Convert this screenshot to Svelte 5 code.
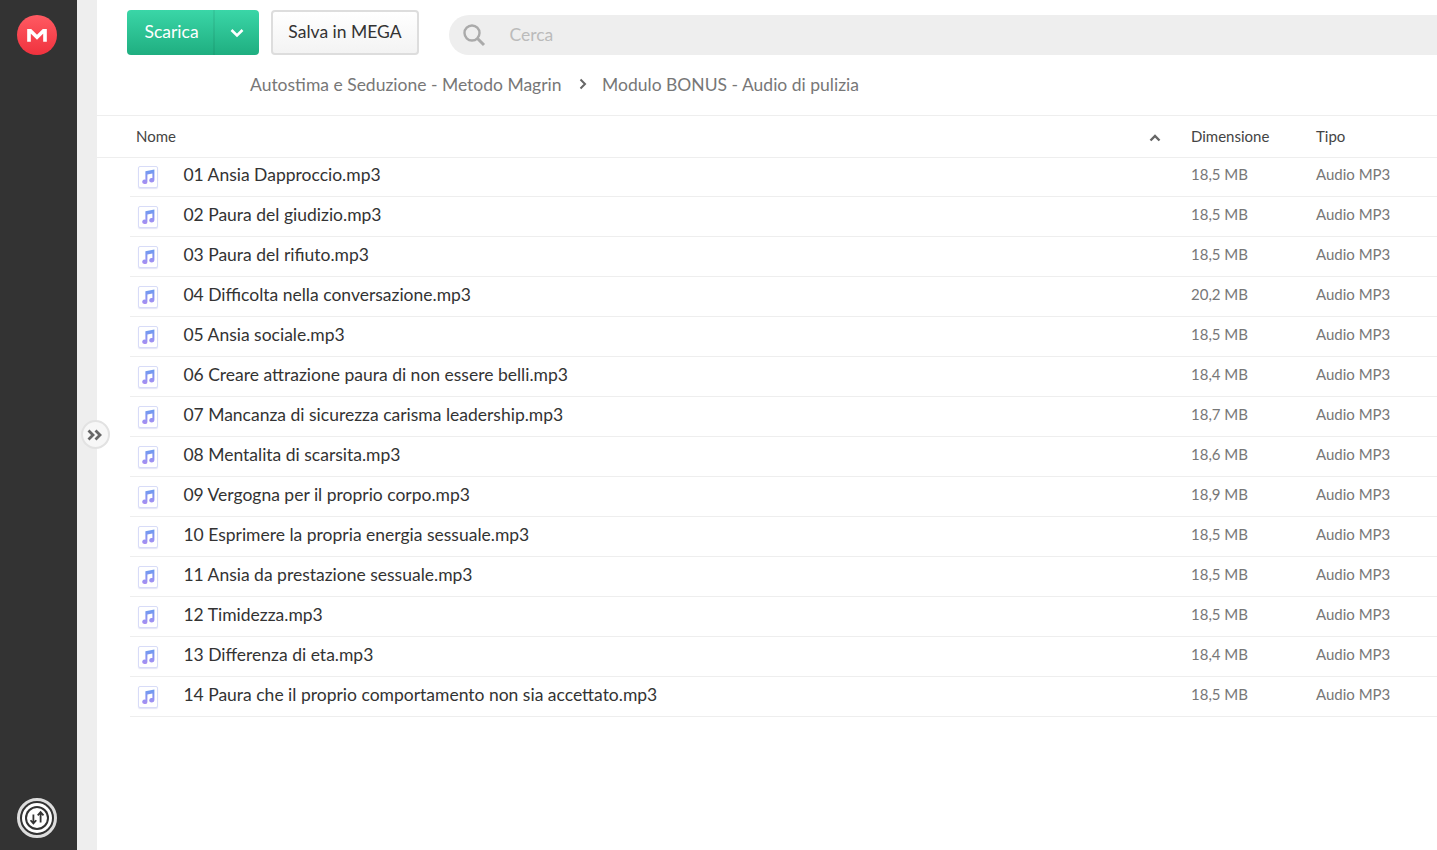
<script>
	const files = [
		['01 Ansia Dapproccio.mp3', '18,5 MB'],
		['02 Paura del giudizio.mp3', '18,5 MB'],
		['03 Paura del rifiuto.mp3', '18,5 MB'],
		['04 Difficolta nella conversazione.mp3', '20,2 MB'],
		['05 Ansia sociale.mp3', '18,5 MB'],
		['06 Creare attrazione paura di non essere belli.mp3', '18,4 MB'],
		['07 Mancanza di sicurezza carisma leadership.mp3', '18,7 MB'],
		['08 Mentalita di scarsita.mp3', '18,6 MB'],
		['09 Vergogna per il proprio corpo.mp3', '18,9 MB'],
		['10 Esprimere la propria energia sessuale.mp3', '18,5 MB'],
		['11 Ansia da prestazione sessuale.mp3', '18,5 MB'],
		['12 Timidezza.mp3', '18,5 MB'],
		['13 Differenza di eta.mp3', '18,4 MB'],
		['14 Paura che il proprio comportamento non sia accettato.mp3', '18,5 MB']
	];
</script>

<div class="page">
	<aside class="sidebar">
		<div class="logo">
			<svg width="20" height="14" viewBox="0 0 22 15">
				<path d="M2.2 15V2.8h1.6L11 10l7.2-7.2h1.6V15" fill="none" stroke="#fff" stroke-width="4" stroke-linejoin="miter" />
			</svg>
		</div>
		<div class="transfers">
			<div class="ring">
				<div class="ring-inner">
					<svg width="18" height="18" viewBox="0 0 20 20">
						<path d="M6 6v10M2.8 12.5 6 16l3.2-3.5M14 15V3.5M10.8 7 14 3.5 17.2 7" fill="none" stroke="#333" stroke-width="2" />
					</svg>
				</div>
			</div>
		</div>
	</aside>

	<div class="strip">
		<button class="collapse" aria-label="Espandi">
			<svg width="16" height="12" viewBox="0 0 16 12">
				<path d="M1.5 1.5 6 6 1.5 10.5M8.5 1.5 13 6 8.5 10.5" fill="none" stroke="#666" stroke-width="2.8" />
			</svg>
		</button>
	</div>

	<main class="main">
		<div class="toolbar">
			<div class="download">
				<span class="download-label">Scarica</span>
				<span class="download-arrow">
					<svg width="14" height="10" viewBox="0 0 14 10">
						<path d="M1.5 2 7 7.5 12.5 2" fill="none" stroke="#fff" stroke-width="2.6" />
					</svg>
				</span>
			</div>
			<div class="save">Salva in MEGA</div>
			<div class="search">
				<svg width="26" height="26" viewBox="0 0 26 26">
					<circle cx="11" cy="11" r="7.5" fill="none" stroke="#aaa" stroke-width="2.4" />
					<path d="M16.5 16.5 23 23" stroke="#aaa" stroke-width="3" />
				</svg>
				<span class="search-text">Cerca</span>
			</div>
		</div>

		<nav class="breadcrumb">
			<span>Autostima e Seduzione - Metodo Magrin</span>
			<svg width="8" height="12" viewBox="0 0 8 12">
				<path d="M1.5 1.5 6 6 1.5 10.5" fill="none" stroke="#666" stroke-width="2" />
			</svg>
			<span class="crumb-last">Modulo BONUS - Audio di pulizia</span>
		</nav>

		<div class="head">
			<span class="head-name">Nome</span>
			<svg class="sort" width="12" height="8" viewBox="0 0 12 8">
				<path d="M1.5 6.5 6 2l4.5 4.5" fill="none" stroke="#666" stroke-width="2.4" />
			</svg>
			<span class="col-size">Dimensione</span>
			<span class="col-type">Tipo</span>
		</div>

		<div class="list">
			{#each files as [name, size]}
				<div class="row">
					<span class="file-icon">
						<svg width="13" height="15" viewBox="0 0 13 15">
							<defs>
								<linearGradient id="note" x1="0" y1="0" x2="0" y2="1">
									<stop offset="0" stop-color="#6a9bf0" />
									<stop offset="1" stop-color="#a98ef2" />
								</linearGradient>
							</defs>
							<path d="M3.4 2.2 12.4.4v10.8a2.6 2.2 0 1 1-2-2.1V4.4L5.4 5.4v7.4a2.6 2.2 0 1 1-2-2.1z" fill="url(#note)" />
						</svg>
					</span>
					<span class="file-name">{name}</span>
					<span class="col-size cell">{size}</span>
					<span class="col-type cell">Audio MP3</span>
				</div>
			{/each}
		</div>
	</main>
</div>

<style>
	:global(body) {
		margin: 0;
		overflow: hidden;
	}

	.page {
		display: flex;
		height: 850px;
		font-family: Lato, sans-serif;
		background: #fff;
	}

	.sidebar {
		width: 77px;
		flex: none;
		background: #333;
		display: flex;
		flex-direction: column;
		justify-content: space-between;
		align-items: center;
		padding: 15px 3px 12px 0;
		box-sizing: border-box;
	}

	.logo {
		width: 40px;
		height: 40px;
		border-radius: 50%;
		background: linear-gradient(#ff5a62, #f0323e);
		display: flex;
		align-items: center;
		justify-content: center;
	}

	.transfers {
		width: 40px;
		height: 40px;
	}

	.ring {
		width: 40px;
		height: 40px;
		box-sizing: border-box;
		border: 3px solid #ddd;
		border-radius: 50%;
		display: flex;
		align-items: center;
		justify-content: center;
	}

	.ring-inner {
		width: 20px;
		height: 20px;
		border-radius: 50%;
		background: #fff;
		box-shadow: 0 0 0 2px #333, 0 0 0 5px #fff;
		display: flex;
		align-items: center;
		justify-content: center;
	}

	.strip {
		width: 20px;
		flex: none;
		background: #eee;
		position: relative;
	}

	.collapse {
		position: absolute;
		left: 4px;
		top: 420px;
		width: 29px;
		height: 29px;
		padding: 0 1px 0 0;
		box-sizing: border-box;
		border: 2px solid #e2e2e2;
		border-radius: 50%;
		background: #f7f7f7;
		display: flex;
		align-items: center;
		justify-content: center;
	}

	.main {
		flex: 1;
		min-width: 0;
	}

	.toolbar {
		display: flex;
		align-items: flex-start;
		padding: 10px 0 0 30px;
		height: 45px;
	}

	.download {
		display: flex;
		width: 132px;
		height: 45px;
		border-radius: 4px;
		background: linear-gradient(#3ad6a7, #1fae80);
		color: #fff;
		font-size: 17.5px;
		line-height: 43px;
	}

	.download-label {
		width: 88px;
		box-sizing: border-box;
		padding-left: 17.5px;
		border-right: 2px solid rgba(0, 0, 0, 0.06);
	}

	.download-arrow {
		flex: 1;
		display: flex;
		align-items: center;
		justify-content: center;
		padding-right: 1px;
	}

	.save {
		margin-left: 12px;
		width: 148px;
		height: 45px;
		box-sizing: border-box;
		border: 2px solid #ddd;
		border-radius: 4px;
		background: linear-gradient(#fff, #f3f3f3);
		color: #333;
		font-size: 17.5px;
		line-height: 39px;
		text-align: center;
	}

	.search {
		margin: 5px 0 0 30px;
		flex: 1;
		height: 40px;
		border-radius: 20px 0 0 20px;
		background: #eee;
		display: flex;
		align-items: center;
		padding-left: 12px;
	}

	.search-text {
		margin-left: 22.5px;
		margin-top: -1px;
		font-size: 17.5px;
		color: #bbb;
	}

	.breadcrumb {
		display: flex;
		align-items: center;
		gap: 17px;
		height: 60px;
		padding: 0 0 2px 153px;
		box-sizing: border-box;
		font-size: 17.5px;
		color: #777;
	}

	.crumb-last {
		margin-left: -1.5px;
	}

	.head {
		display: flex;
		align-items: center;
		height: 43px;
		box-sizing: border-box;
		border-top: 1px solid #eee;
		border-bottom: 1px solid #eee;
		padding-bottom: 1px;
		font-size: 15px;
		color: #444;
	}

	.head-name {
		margin-left: 39px;
		width: 1013px;
	}

	.sort {
		width: 12px;
		margin-right: 30px;
		margin-top: 3px;
	}

	.col-size {
		width: 125px;
		flex: none;
	}

	.col-type {
		flex: none;
	}

	.list {
		margin-left: 33px;
	}

	.row {
		display: flex;
		align-items: center;
		height: 40px;
		box-sizing: border-box;
		border-bottom: 1px solid #eee;
		padding-bottom: 6px;
	}

	.row:first-child {
		height: 39px;
		padding-bottom: 7px;
	}

	.file-icon {
		width: 20px;
		height: 22px;
		box-sizing: border-box;
		margin: 6px 0 0 8px;
		border: 1px solid #d8dcf8;
		border-radius: 2px;
		background: #fff;
		box-shadow: 0 1px 1px rgba(120, 120, 220, 0.2);
		display: flex;
		align-items: center;
		justify-content: center;
	}

	.file-name {
		margin: 2px 0 0 25.4px;
		width: 1007.6px;
		font-size: 17.5px;
		color: #333;
	}

	.cell {
		font-size: 15px;
		color: #777;
	}
</style>
